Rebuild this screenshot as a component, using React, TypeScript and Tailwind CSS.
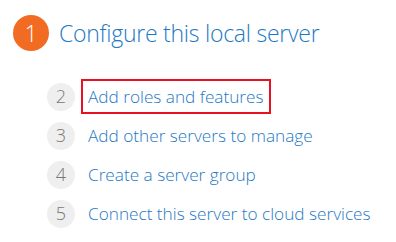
const steps = [
  { n: 2, label: "Add roles and features", active: true },
  { n: 3, label: "Add other servers to manage" },
  { n: 4, label: "Create a server group" },
  { n: 5, label: "Connect this server to cloud services" },
]

const App = () => {
  return (
    <div
      className="h-[242px] w-[396px] bg-white"
      style={{ fontFamily: '"Open Sans", "Noto Sans", sans-serif' }}
    >
      <div className="flex items-center pl-[13px] pt-[15px]">
        <div className="flex size-[36px] items-center justify-center rounded-full bg-[#f26b22] text-[23px] font-light text-white">
          1
        </div>
        <span className="ml-[10px] text-[23px] font-light leading-none tracking-[-0.25px] text-[#1e79c4]">
          Configure this local server
        </span>
      </div>

      <ul className="mt-[26px] flex flex-col pl-[47px]">
        {steps.map((step) => (
          <li key={step.n} className="flex h-[39px] items-center">
            <div className="flex size-[28px] shrink-0 items-center justify-center rounded-full bg-[#efefef] text-[18px] font-light text-[#777777]">
              {step.n}
            </div>
            <span
              className={
                step.active
                  ? "ml-[6px] border-2 border-[#e81123] px-[5px] py-[4px] text-[17.2px] font-light leading-[23px] text-[#1e79c4]"
                  : "ml-[13px] text-[17.2px] font-light leading-[23px] text-[#1e79c4]"
              }
            >
              {step.label}
            </span>
          </li>
        ))}
      </ul>
    </div>
  )
}

export default App
